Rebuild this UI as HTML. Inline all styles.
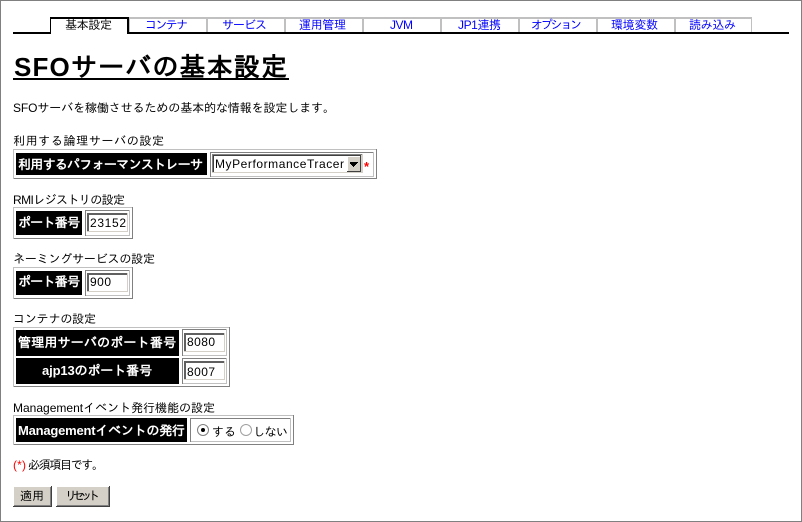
<!DOCTYPE html>
<html lang="ja"><head><meta charset="utf-8"><title>SFOサーバの基本設定</title>
<style>
html,body{margin:0;padding:0;background:#fff;width:802px;height:522px;overflow:hidden}
svg{display:block;font-family:"Liberation Sans","IPAGothic","Noto Sans CJK JP",sans-serif;font-size:12px}
rect,path.c{shape-rendering:crispEdges}
.b{font-weight:bold;font-size:13px;fill:#fff}
.t{fill:#00f}
</style></head><body>
<svg width="802" height="522" viewBox="0 0 802 522" xmlns="http://www.w3.org/2000/svg">
<rect width="802" height="522" fill="#fff"/>
<!-- page border -->
<rect x="0" y="0" width="802" height="1" fill="#808080"/>
<rect x="0" y="0" width="1" height="522" fill="#808080"/>
<rect x="801" y="0" width="1" height="522" fill="#808080"/>
<rect x="0" y="521" width="802" height="1" fill="#808080"/>
<!-- tabs -->
<rect x="128" y="17" width="624" height="2" fill="#c0c0c0"/>
<rect x="128" y="17" width="2" height="15" fill="#c0c0c0"/>
<rect x="206" y="17" width="2" height="15" fill="#c0c0c0"/>
<rect x="284" y="17" width="2" height="15" fill="#c0c0c0"/>
<rect x="362" y="17" width="2" height="15" fill="#c0c0c0"/>
<rect x="440" y="17" width="2" height="15" fill="#c0c0c0"/>
<rect x="518" y="17" width="2" height="15" fill="#c0c0c0"/>
<rect x="596" y="17" width="2" height="15" fill="#c0c0c0"/>
<rect x="674" y="17" width="2" height="15" fill="#c0c0c0"/>
<rect x="751" y="17" width="1" height="15" fill="#c0c0c0"/>
<rect x="13" y="32" width="38" height="2" fill="#000"/>
<rect x="127" y="32" width="662" height="2" fill="#000"/>
<rect x="50" y="17" width="79" height="2" fill="#000"/>
<rect x="50" y="17" width="1" height="17" fill="#000"/>
<rect x="127" y="17" width="2" height="17" fill="#000"/>
<text x="65" y="29" textLength="47" lengthAdjust="spacing">基本設定</text>
<text class="t" x="145" y="29" textLength="43" lengthAdjust="spacing">コンテナ</text>
<text class="t" x="222" y="29" textLength="45" lengthAdjust="spacing">サービス</text>
<text class="t" x="299" y="29" textLength="47" lengthAdjust="spacing">運用管理</text>
<text class="t" x="390" y="29" textLength="23" lengthAdjust="spacing">JVM</text>
<text class="t" x="458" y="29" textLength="43" lengthAdjust="spacing">JP1連携</text>
<text class="t" x="531" y="29" textLength="51" lengthAdjust="spacing">オプション</text>
<text class="t" x="611" y="29" textLength="47" lengthAdjust="spacing">環境変数</text>
<text class="t" x="689" y="29" textLength="47" lengthAdjust="spacing">読み込み</text>
<!-- heading -->
<text x="14" y="76" font-size="26" font-weight="bold" textLength="273" lengthAdjust="spacing">SFOサーバの基本設定</text>
<rect x="13" y="78" width="276" height="2" fill="#000"/>
<text x="13" y="112" textLength="322" lengthAdjust="spacing">SFOサーバを稼働させるための基本的な情報を設定します。</text>
<!-- table 1 -->
<text x="13" y="145" textLength="151" lengthAdjust="spacing">利用する論理サーバの設定</text>
<rect x="13" y="149" width="364" height="30" fill="#c0c0c0"/>
<rect x="14" y="150" width="362" height="28" fill="#fff"/>
<rect x="14" y="178" width="363" height="1" fill="#808080"/>
<rect x="376" y="149" width="1" height="30" fill="#808080"/>
<rect x="16" y="153" width="191" height="22" fill="#000"/>
<text class="b" x="18" y="169" textLength="185" lengthAdjust="spacing">利用するパフォーマンストレーサ</text>
<rect x="210" y="152" width="164" height="25" fill="#c0c0c0"/>
<rect x="210" y="152" width="163" height="1" fill="#808080"/>
<rect x="210" y="152" width="1" height="25" fill="#808080"/>
<rect x="211" y="153" width="162" height="23" fill="#fff"/>
<rect x="212" y="154" width="151" height="19" fill="#d4d0c8"/>
<rect x="212" y="154" width="150" height="1" fill="#808080"/>
<rect x="212" y="154" width="1" height="18" fill="#808080"/>
<rect x="213" y="155" width="148" height="1" fill="#404040"/>
<rect x="213" y="155" width="1" height="17" fill="#404040"/>
<rect x="214" y="156" width="147" height="16" fill="#fff"/>
<rect x="347" y="156" width="14" height="16" fill="#d4d0c8"/>
<rect x="347" y="156" width="14" height="1" fill="#fff"/>
<rect x="347" y="156" width="1" height="16" fill="#fff"/>
<rect x="360" y="156" width="1" height="16" fill="#404040"/>
<rect x="347" y="171" width="14" height="1" fill="#404040"/>
<path class="c" d="M350 162h8v1h-1v1h-1v1h-1v1h-1v1h-1v-1h-1v-1h-1v-1h-1z" fill="#000"/>
<text x="215" y="168" font-size="12" textLength="129" lengthAdjust="spacing">MyPerformanceTracer</text>
<text x="364" y="171" font-size="13" font-weight="bold" fill="#f00">*</text>
<!-- table 2 -->
<text x="13" y="204" textLength="112" lengthAdjust="spacing">RMIレジストリの設定</text>
<rect x="13" y="207" width="120" height="32" fill="#c0c0c0"/>
<rect x="14" y="208" width="118" height="30" fill="#fff"/>
<rect x="14" y="238" width="119" height="1" fill="#808080"/>
<rect x="132" y="207" width="1" height="32" fill="#808080"/>
<rect x="16" y="211" width="66" height="24" fill="#000"/>
<text class="b" x="18" y="227" textLength="62" lengthAdjust="spacing">ポート番号</text>
<rect x="85" y="210" width="45" height="26" fill="#c0c0c0"/>
<rect x="85" y="210" width="44" height="1" fill="#808080"/>
<rect x="85" y="210" width="1" height="26" fill="#808080"/>
<rect x="86" y="211" width="43" height="24" fill="#fff"/>
<rect x="87" y="213" width="41" height="19" fill="#d4d0c8"/>
<rect x="87" y="213" width="40" height="2" fill="#606060"/>
<rect x="87" y="213" width="2" height="18" fill="#606060"/>
<rect x="89" y="215" width="38" height="16" fill="#fff"/>
<text x="90" y="227" textLength="36" lengthAdjust="spacing">23152</text>
<!-- table 3 -->
<text x="13" y="263" textLength="142" lengthAdjust="spacing">ネーミングサービスの設定</text>
<rect x="13" y="267" width="120" height="32" fill="#c0c0c0"/>
<rect x="14" y="268" width="118" height="30" fill="#fff"/>
<rect x="14" y="298" width="119" height="1" fill="#808080"/>
<rect x="132" y="267" width="1" height="32" fill="#808080"/>
<rect x="16" y="271" width="66" height="24" fill="#000"/>
<text class="b" x="18" y="286" textLength="62" lengthAdjust="spacing">ポート番号</text>
<rect x="85" y="270" width="45" height="26" fill="#c0c0c0"/>
<rect x="85" y="270" width="44" height="1" fill="#808080"/>
<rect x="85" y="270" width="1" height="26" fill="#808080"/>
<rect x="86" y="271" width="43" height="24" fill="#fff"/>
<rect x="87" y="273" width="41" height="19" fill="#d4d0c8"/>
<rect x="87" y="273" width="40" height="2" fill="#606060"/>
<rect x="87" y="273" width="2" height="18" fill="#606060"/>
<rect x="89" y="275" width="38" height="16" fill="#fff"/>
<text x="90" y="286" textLength="21" lengthAdjust="spacing">900</text>
<!-- table 4 -->
<text x="13" y="323" textLength="83" lengthAdjust="spacing">コンテナの設定</text>
<rect x="13" y="327" width="217" height="60" fill="#c0c0c0"/>
<rect x="14" y="328" width="215" height="58" fill="#fff"/>
<rect x="14" y="386" width="216" height="1" fill="#808080"/>
<rect x="229" y="327" width="1" height="60" fill="#808080"/>
<rect x="16" y="330" width="163" height="26" fill="#000"/>
<rect x="16" y="358" width="163" height="26" fill="#000"/>
<text class="b" x="18" y="347" textLength="158" lengthAdjust="spacing">管理用サーバのポート番号</text>
<text class="b" x="42" y="375" textLength="110" lengthAdjust="spacing">ajp13のポート番号</text>
<rect x="182" y="329" width="45" height="27" fill="#c0c0c0"/>
<rect x="182" y="329" width="44" height="1" fill="#808080"/>
<rect x="182" y="329" width="1" height="27" fill="#808080"/>
<rect x="183" y="330" width="43" height="25" fill="#fff"/>
<rect x="184" y="333" width="41" height="19" fill="#d4d0c8"/>
<rect x="184" y="333" width="40" height="2" fill="#606060"/>
<rect x="184" y="333" width="2" height="18" fill="#606060"/>
<rect x="186" y="335" width="38" height="16" fill="#fff"/>
<text x="187" y="346" textLength="28" lengthAdjust="spacing">8080</text>
<rect x="182" y="358" width="45" height="26" fill="#c0c0c0"/>
<rect x="182" y="358" width="44" height="1" fill="#808080"/>
<rect x="182" y="358" width="1" height="26" fill="#808080"/>
<rect x="183" y="359" width="43" height="24" fill="#fff"/>
<rect x="184" y="361" width="41" height="19" fill="#d4d0c8"/>
<rect x="184" y="361" width="40" height="2" fill="#606060"/>
<rect x="184" y="361" width="2" height="18" fill="#606060"/>
<rect x="186" y="363" width="38" height="16" fill="#fff"/>
<text x="187" y="376" textLength="28" lengthAdjust="spacing">8007</text>
<!-- table 5 -->
<text x="13" y="412" textLength="202" lengthAdjust="spacing">Managementイベント発行機能の設定</text>
<rect x="13" y="415" width="281" height="30" fill="#c0c0c0"/>
<rect x="14" y="416" width="279" height="28" fill="#fff"/>
<rect x="14" y="444" width="280" height="1" fill="#808080"/>
<rect x="293" y="415" width="1" height="30" fill="#808080"/>
<rect x="16" y="418" width="171" height="24" fill="#000"/>
<text class="b" x="18" y="435" textLength="167" lengthAdjust="spacing">Managementイベントの発行</text>
<rect x="190" y="418" width="101" height="24" fill="#c0c0c0"/>
<rect x="190" y="418" width="100" height="1" fill="#808080"/>
<rect x="190" y="418" width="1" height="24" fill="#808080"/>
<rect x="191" y="419" width="99" height="22" fill="#fff"/>
<circle cx="203" cy="430" r="5.5" fill="#fff" stroke="#808080"/>
<circle cx="203" cy="430" r="2" fill="#000"/>
<circle cx="246" cy="430" r="5.5" fill="#fff" stroke="#a0a0a0"/>
<text x="212" y="436" font-size="12" textLength="24" lengthAdjust="spacing">する</text>
<text x="253" y="436" font-size="12" textLength="35" lengthAdjust="spacing">しない</text>
<!-- required -->
<text x="13" y="469" fill="#f00" textLength="13" lengthAdjust="spacing">(*)</text>
<text x="28" y="469" textLength="76" lengthAdjust="spacing">必須項目です。</text>
<!-- buttons -->
<rect x="13" y="486" width="39" height="21" fill="#404040"/>
<rect x="13" y="486" width="38" height="20" fill="#fff"/>
<rect x="14" y="487" width="37" height="19" fill="#808080"/>
<rect x="14" y="487" width="36" height="18" fill="#d4d0c8"/>
<text x="20" y="500" textLength="24" lengthAdjust="spacing">適用</text>
<rect x="56" y="486" width="54" height="21" fill="#404040"/>
<rect x="56" y="486" width="53" height="20" fill="#fff"/>
<rect x="57" y="487" width="52" height="19" fill="#808080"/>
<rect x="57" y="487" width="51" height="18" fill="#d4d0c8"/>
<text x="65" y="500" textLength="35" lengthAdjust="spacing">リセット</text>
</svg>
</body></html>
